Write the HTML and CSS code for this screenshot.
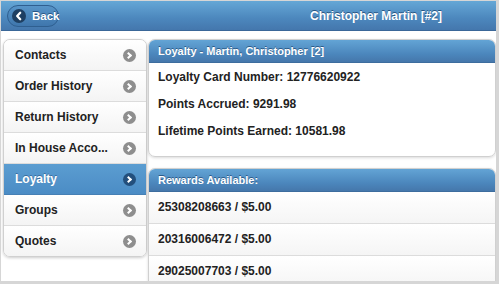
FILE: index.html
```html
<html>

<head>
    <meta http-equiv="Content-Type" content="text/html" charset="utf-8">
    <title>Christopher Martin [#2]</title>
    <link rel="stylesheet" href="styles.css">
</head>

<body>
    <div class="page">
        <div class="topbar">
            <a class="back-btn">
                <span class="back-icon">
                    <svg width="14" height="14" viewBox="0 0 14 14"><path d="M8.2 3.8 L5.2 7 L8.2 10.2" fill="none" stroke="#fff" stroke-width="2.3" stroke-linecap="round" stroke-linejoin="round"/></svg>
                </span>
                Back
            </a>
            <div class="title">Christopher Martin [#2]</div>
        </div>

        <div class="main">
            <ul class="nav">
                <li>Contacts <span class="arrow"></span></li>
                <li>Order History <span class="arrow"></span></li>
                <li>Return History <span class="arrow"></span></li>
                <li>In House Acco... <span class="arrow"></span></li>
                <li class="active">Loyalty <span class="arrow"></span></li>
                <li>Groups <span class="arrow"></span></li>
                <li>Quotes <span class="arrow"></span></li>
            </ul>

            <div class="content">
                <div class="panel info">
                    <div class="panel-head">Loyalty - Martin, Christopher [2]</div>
                    <div class="panel-body">
                        <div class="line">Loyalty Card Number: 12776620922</div>
                        <div class="line">Points Accrued: 9291.98</div>
                        <div class="line">Lifetime Points Earned: 10581.98</div>
                    </div>
                </div>

                <div class="panel rewards">
                    <div class="panel-head">Rewards Available:</div>
                    <div class="row">25308208663 / $5.00</div>
                    <div class="row">20316006472 / $5.00</div>
                    <div class="row">29025007703 / $5.00</div>
                </div>
            </div>
        </div>
    </div>
</body>

</html>
```

FILE: styles.css
```css
body {
    margin: 0;
    padding: 1px 3px 3px 1px;
    background-color: #d6d6d6;
    font-family: 'Liberation Sans', Arial, sans-serif;
    overflow: hidden;
}

.page {
    height: 280px;
    background-color: #fff;
    overflow: hidden;
}

.topbar {
    display: flex;
    align-items: center;
    height: 29px;
    padding-left: 6px;
    background: linear-gradient(#65a7d6, #4c87bd 60%, #4477ad);
    border-bottom: 1px solid #3a6798;
}

.back-btn {
    display: flex;
    align-items: center;
    gap: 6px;
    width: 46px;
    height: 20px;
    padding-left: 4px;
    border: 1px solid #2f5f90;
    border-radius: 11px;
    background: linear-gradient(#5794c8, #3f76ad);
    color: #fff;
    font-weight: bold;
    font-size: 11.5px;
    text-shadow: 0 -1px 0 #2a5683;
}

.back-icon {
    display: flex;
    align-items: center;
    justify-content: center;
    width: 14px;
    height: 14px;
    border-radius: 50%;
    background-color: #1e3f62;
}

.title {
    flex: 1;
    padding-left: 251px;
    color: #fff;
    font-weight: bold;
    font-size: 12px;
    text-shadow: 0 -1px 0 #2a5683;
}

.main {
    display: flex;
    gap: 1px;
    padding: 8px 0 0 2px;
}

/* left menu */
.nav {
    list-style: none;
    margin: 0;
    padding: 0;
    width: 142px;
    height: 216px;
    border: 1px solid #d0d0d0;
    border-radius: 7px;
    box-shadow: 0 1px 3px rgba(0, 0, 0, 0.2);
    overflow: hidden;
    flex-shrink: 0;
}

.nav li {
    display: flex;
    align-items: center;
    justify-content: space-between;
    height: 30px;
    padding: 0 10px 0 11px;
    border-bottom: 1px solid #dcdcdc;
    background: linear-gradient(#fff, #f4f4f4);
    color: #222;
    font-weight: bold;
    font-size: 12px;
}

.nav li:last-child {
    border-bottom: 0;
}

.nav li.active {
    background: linear-gradient(#5b9dd1, #4b8cc5);
    border-bottom-color: #4680b5;
    color: #fff;
    text-shadow: 0 -1px 0 #3a6e9e;
}

.arrow {
    position: relative;
    width: 13px;
    height: 13px;
    border-radius: 50%;
    background-color: #8e8e8e;
}

.arrow::after {
    content: '';
    position: absolute;
    top: 4px;
    left: 3px;
    width: 3px;
    height: 3px;
    border-top: 2px solid #fff;
    border-right: 2px solid #fff;
    transform: rotate(45deg);
}

.nav li.active .arrow {
    background-color: #234f7c;
}

/* right panels */
.content {
    flex: 1;
    display: flex;
    flex-direction: column;
    gap: 11px;
}

.panel {
    border: 1px solid #d0d0d0;
    border-radius: 7px 7px 0 0;
    overflow: hidden;
    box-shadow: 0 1px 3px rgba(0, 0, 0, 0.15);
}

.info {
    border-radius: 7px;
}

.panel-head {
    height: 22px;
    line-height: 22px;
    padding-left: 9px;
    background: linear-gradient(#63a4d5, #4b86bc 65%, #4577ab);
    border-bottom: 1px solid #3d6d9e;
    color: #fff;
    font-weight: bold;
    font-size: 11px;
    text-shadow: 0 -1px 0 #2d5b88;
}

.panel-body {
    padding: 1px 9px 11px;
}

.line {
    height: 27px;
    line-height: 27px;
    color: #222;
    font-weight: bold;
    font-size: 12px;
}

.row {
    height: 31px;
    line-height: 31px;
    padding-left: 9px;
    border-bottom: 1px solid #dcdcdc;
    background: linear-gradient(#fff, #f5f5f5);
    color: #222;
    font-weight: bold;
    font-size: 12px;
}
```
